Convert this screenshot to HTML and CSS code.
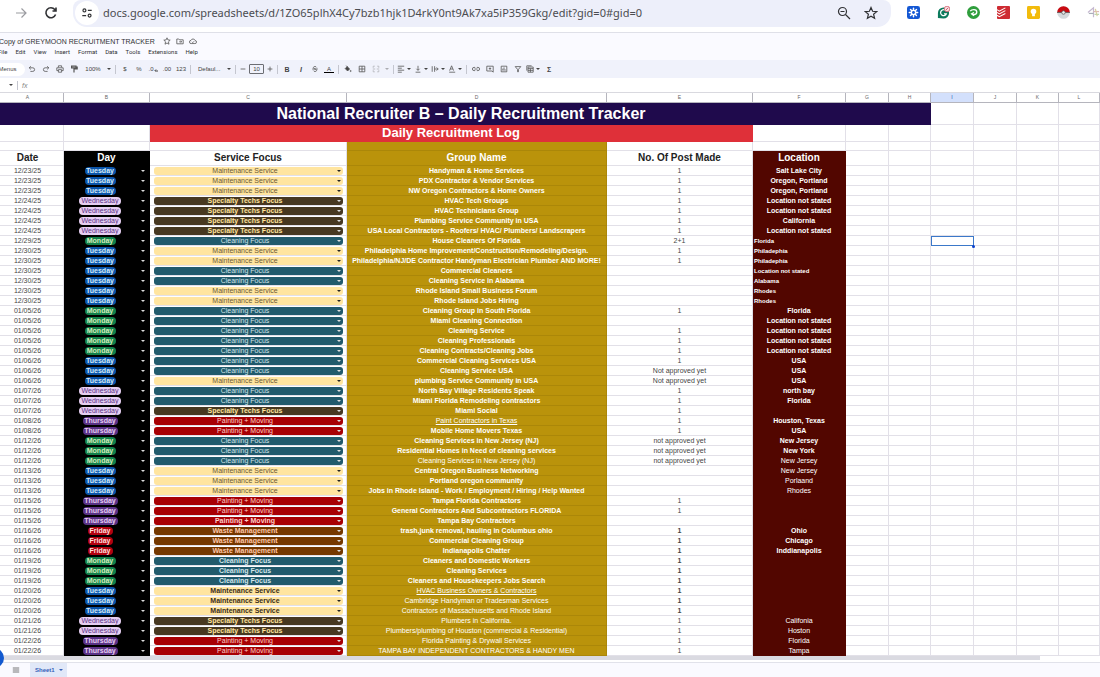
FILE: index.html
```html
<!DOCTYPE html>
<html lang="en">

<head>
    <meta charset="utf-8">
    <title>Copy of GREYMOON RECRUITMENT TRACKER</title>
    <link rel="stylesheet" href="styles.css">
</head>

<body>
    <div class="browserBar">
        <button class="navButton" aria-label="Forward">
            <svg class="navIcon dim" viewBox="0 0 14 14"><path d="M2 7h10M7.500 2.500L12 7l-4.500 4.500" /></svg>
        </button>
        <button class="navButton" aria-label="Reload">
            <svg class="navIcon" viewBox="0 0 14 14"><path d="M11.600 8.500A5 5 0 1 1 10.800 3.500L12 5M12 1.500V5H8.500" /></svg>
        </button>
        <div class="addressBar">
            <button class="siteInfo" aria-label="Site information">
                <svg class="siteIcon" viewBox="0 0 14 14"><circle cx="4" cy="4" r="1.700" /><path d="M8 4h4.500M1.500 10H6" /><circle cx="10" cy="10" r="1.700" /></svg>
            </button>
            <input type="text" class="url" aria-label="Address" value="docs.google.com/spreadsheets/d/1ZO65plhX4Cy7bzb1hjk1D4rkY0nt9Ak7xa5iP359Gkg/edit?gid=0#gid=0">
            <button class="barButton" aria-label="Zoom">
                <svg class="navIcon thin" viewBox="0 0 14 14"><circle cx="5.500" cy="5.500" r="4" /><path d="M8.500 8.500L13 13M3.500 5.500h4" /></svg>
            </button>
            <button class="barButton" aria-label="Bookmark">
                <svg class="navIcon thin" viewBox="0 0 14 14"><path d="M7 1.500l1.600 3.800 4.100.3-3.100 2.700 1 4L7 10.200l-3.600 2.100 1-4L1.300 5.600l4.100-.3z" /></svg>
            </button>
        </div>
        <div class="extensions">
            <button class="extButton" aria-label="Loom">
                <svg viewBox="0 0 14 14"><rect width="14" height="14" rx="2.500" fill="#1458d4" /><path d="M7 2.500v9M2.500 7h9M3.800 3.800l6.400 6.400M10.200 3.800l-6.400 6.400" stroke="#fff" stroke-width="1.600" stroke-linecap="round" /><circle cx="7" cy="7" r="3" fill="#fff" /><circle cx="7" cy="7" r="1.500" fill="#1458d4" /></svg>
            </button>
            <button class="extButton" aria-label="Grammarly">
                <svg viewBox="0 0 14 14"><path d="M1 13V7.500A6 6 0 1 1 7 13.500z" fill="#0c7a5c" /><path d="M8.500 4.300A3.200 3.200 0 1 0 10 8.500H7.500" fill="none" stroke="#fff" stroke-width="1.300" /><circle cx="10.800" cy="3.200" r="3" fill="#f7dfe2" stroke="#d25667" stroke-width=".8" /><path d="M9.500 4.500l2.600-2.600" stroke="#d25667" /></svg>
            </button>
            <button class="extButton" aria-label="Capture">
                <svg viewBox="0 0 14 14"><circle cx="7" cy="7" r="7" fill="#2f9e3c" /><path d="M3.500 5.500C5 3.500 10.500 3 10.500 6.500S6 9.500 5.500 8.500M7.500 7L5 8.500l2.500 2" fill="none" stroke="#fff" stroke-width="1.500" /></svg>
            </button>
            <button class="extButton" aria-label="Todoist">
                <svg viewBox="0 0 14 14"><rect width="14" height="14" rx="1" fill="#ce2b32" /><path d="M0 4l2.500 1.500L9 2M0 7l2.500 1.500L9 5M0 10l2.500 1.500L9 8" fill="none" stroke="#fff" stroke-width="1.100" /></svg>
            </button>
            <button class="extButton" aria-label="Keep">
                <svg viewBox="0 0 14 14"><rect width="14" height="14" rx="1.500" fill="#f2bb0c" /><circle cx="7" cy="6" r="3" fill="#fff" /><path d="M5.500 8h3v3h-3z" fill="#fff" /></svg>
            </button>
            <button class="extButton" aria-label="Pokeball">
                <svg viewBox="0 0 14 14"><circle cx="7" cy="7" r="6.800" fill="#d5d9dc" /><path d="M.2 7a6.800 6.800 0 0 1 13.600 0z" fill="#c90b12" /><path d="M0 7h14" stroke="#555" stroke-width=".8" /><circle cx="7" cy="7" r="1.900" fill="#eee" stroke="#555" stroke-width=".8" /></svg>
            </button>
            <button class="extButton" aria-label="Sparkle">
                <svg viewBox="0 0 14 14" fill="none" stroke-width="1.300"><path d="M1 7l6-5v10" stroke="#c5b8cf" /><path d="M2 8h5" stroke="#a9aeb9" /><path d="M7 6h6" stroke="#dfb6b6" /><path d="M8 9h5" stroke="#b6d6b0" /><path d="M9 3l2 8" stroke="#d9cfa0" /></svg>
            </button>
        </div>
    </div>

    <header class="docHeader">
        <div class="titleRow">
            <h1 class="docTitle">Copy of GREYMOON RECRUITMENT TRACKER</h1>
            <button class="titleButton" aria-label="Star"><svg class="icon" viewBox="0 0 10 10"><path d="M5 1l1.200 2.700 2.800.2L6.800 6l.7 3L5 7.500 2.500 9l.7-3L1 3.900l2.800-.2z" /></svg></button>
            <button class="titleButton" aria-label="Move"><svg class="icon" viewBox="0 0 10 10"><path d="M1 8.500v-6h2.500l1 1H9v5zM4 6h3M5.700 4.700L7 6 5.700 7.300" /></svg></button>
            <button class="titleButton" aria-label="Saved to Drive"><svg class="icon" viewBox="0 0 10 10"><path d="M2.700 8.200a2 2 0 0 1-.2-4 2.700 2.700 0 0 1 5.100.2 1.900 1.900 0 0 1-.2 3.800zM3.700 6l1 1 1.700-1.700" /></svg></button>
        </div>
        <nav class="menuRow">
            <button class="menu">File</button>
            <button class="menu">Edit</button>
            <button class="menu">View</button>
            <button class="menu">Insert</button>
            <button class="menu">Format</button>
            <button class="menu">Data</button>
            <button class="menu">Tools</button>
            <button class="menu">Extensions</button>
            <button class="menu">Help</button>
        </nav>
    </header>

    <div class="toolbar">
        <button class="menusButton">Menus</button>
        <button class="tool" aria-label="Undo"><svg class="icon" viewBox="0 0 10 10"><path d="M3.500 1.500L1.500 3.500l2 2M1.500 3.500H6a2.200 2.200 0 0 1 0 4.500H3" /></svg></button>
        <button class="tool" aria-label="Redo"><svg class="icon" viewBox="0 0 10 10"><path d="M6.500 1.500l2 2-2 2M8.500 3.500H4A2.200 2.200 0 0 0 4 8h3" /></svg></button>
        <button class="tool" aria-label="Print"><svg class="icon" viewBox="0 0 10 10"><path d="M3 3V1h4v2M3 7H1V3.500h8V7H7M3 5.800h4V9H3z" /></svg></button>
        <button class="tool" aria-label="Paint format"><svg class="icon bold" viewBox="0 0 10 10"><path d="M2 1.500h5.500v2H2zM7.500 2.500H9V5H5v1.500M5 6v3.500" /></svg></button>
        <button class="zoomButton">100%</button>
        <span class="caret"></span>
        <span class="divider"></span>
        <button class="tool">$</button>
        <button class="tool">%</button>
        <button class="tool" aria-label="Decrease decimal places">.0<svg class="tinyArrow" viewBox="0 0 4 6"><path d="M4 5H1M2 3.500L.6 5" /></svg></button>
        <button class="tool" aria-label="Increase decimal places">.00</button>
        <button class="tool">123</button>
        <span class="divider"></span>
        <select class="fontSelect" aria-label="Font">
            <option>Defaul...</option>
        </select>
        <span class="caret"></span>
        <span class="divider"></span>
        <button class="step" aria-label="Decrease font size"><svg class="icon" viewBox="0 0 10 10"><path d="M2 5h6" /></svg></button>
        <input type="text" class="fontSize" aria-label="Font size" value="10">
        <button class="step" aria-label="Increase font size"><svg class="icon" viewBox="0 0 10 10"><path d="M2 5h6M5 2v6" /></svg></button>
        <span class="divider"></span>
        <button class="tool strong">B</button>
        <button class="tool strong italic">I</button>
        <button class="tool" aria-label="Strikethrough"><svg class="icon" viewBox="0 0 10 10"><path d="M1.500 5h7M7 3C6.500 1.500 3 1.500 3 3.200 3 4.200 4 4.600 5 5c1.500.5 2 1 2 1.800C7 8.500 3.500 8.500 3 7" /></svg></button>
        <button class="tool textColor">A</button>
        <span class="divider"></span>
        <button class="tool" aria-label="Fill color"><svg class="icon" viewBox="0 0 10 10"><path d="M3 1l4 4-2.500 2.500L1.500 4.500 4 2z" fill="#444" /><circle cx="8.300" cy="7.500" r=".7" /></svg></button>
        <button class="tool" aria-label="Borders"><svg class="icon" viewBox="0 0 10 10"><path d="M1.500 1.500h7v7h-7zM5 1.500v7M1.500 5h7" /></svg></button>
        <button class="tool faded" aria-label="Merge cells"><svg class="icon" viewBox="0 0 10 10"><path d="M3.500 1.500h-2v2M1.500 6.500v2h2M6.500 1.500h2v2M8.500 6.500v2h-2M1 5h3M9 5H6" /></svg></button>
        <span class="caret faded"></span>
        <span class="divider"></span>
        <button class="menuTool" aria-label="Horizontal align"><svg class="icon" viewBox="0 0 10 10"><path d="M1 1.500h8M1 4h5M1 6.500h8M1 9h5" /></svg><span class="caret"></span></button>
        <button class="menuTool" aria-label="Vertical align"><svg class="icon" viewBox="0 0 10 10"><path d="M5 1v5.500M3 4.700l2 2 2-2M2 9h6" /></svg><span class="caret"></span></button>
        <button class="menuTool" aria-label="Text wrapping"><svg class="icon" viewBox="0 0 10 10"><path d="M1.500 1.500v7M4.500 1.500v7M4.500 5H9M7 3l2 2-2 2" /></svg><span class="caret"></span></button>
        <button class="menuTool" aria-label="Text rotation"><svg class="icon" viewBox="0 0 10 10"><path d="M2 7l2.500-6L7 7M3 5h3M1.500 9H9" /></svg><span class="caret"></span></button>
        <span class="divider"></span>
        <button class="tool" aria-label="Insert link"><svg class="icon" viewBox="0 0 10 10"><path d="M4 3H2.500a2 2 0 0 0 0 4H4M6 3h1.500a2 2 0 0 1 0 4H6M3 5h4" /></svg></button>
        <button class="tool" aria-label="Insert comment"><svg class="icon" viewBox="0 0 10 10"><path d="M1 1.500h8V9L7.500 7.500H1zM5 3v3M3.500 4.500h3" /></svg></button>
        <button class="tool" aria-label="Insert chart"><svg class="icon" viewBox="0 0 10 10"><path d="M1.500 1.500h7v7h-7zM3.500 7V4.500M5 7V3M6.500 7V5.500" /></svg></button>
        <button class="tool" aria-label="Filter"><svg class="icon" viewBox="0 0 10 10"><path d="M1.500 2h7L5.500 5.500v3h-1v-3z" /></svg></button>
        <button class="menuTool" aria-label="Filter views"><svg class="icon" viewBox="0 0 10 10"><path d="M1 7V1h6M2.500 2.500H9V9H2.500zM2.500 4.500H9M5.500 4.500V9M2.500 6.700H9" /></svg><span class="caret"></span></button>
        <button class="tool strong">&Sigma;</button>
    </div>

    <div class="formulaBar">
        <button class="nameBox" aria-label="Name box"><span class="caret"></span></button>
        <span class="divider"></span>
        <label class="fx" for="formula">fx</label>
        <input type="text" id="formula" class="formula">
    </div>

    <main class="sheet">
        <table class="grid">
            <colgroup>
                <col class="colA">
                <col class="colB">
                <col class="colC">
                <col class="colD">
                <col class="colE">
                <col class="colF">
                <col class="colG">
                <col class="colH">
                <col class="colI">
                <col class="colJ">
                <col class="colK">
                <col>
            </colgroup>
            <thead>
                <tr class="letters">
                    <th class="date">A</th>
                    <th>B</th>
                    <th>C</th>
                    <th>D</th>
                    <th>E</th>
                    <th>F</th>
                    <th>G</th>
                    <th>H</th>
                    <th class="active">I</th>
                    <th>J</th>
                    <th>K</th>
                    <th>L</th>
                </tr>
            </thead>
            <tbody id="rows">
                <tr class="titleLine">
                    <td colspan="8" class="banner">National Recruiter B – Daily Recruitment Tracker</td>
                    <td></td><td></td><td></td><td></td>
                </tr>
                <tr class="subLine">
                    <td></td><td></td>
                    <td colspan="3" class="subBanner">Daily Recruitment Log</td>
                    <td></td><td></td><td></td><td></td><td></td><td></td><td></td>
                </tr>
                <tr class="gapLine">
                    <td></td><td></td><td></td>
                    <td class="group"></td>
                    <td></td><td></td><td></td><td></td><td></td><td></td><td></td><td></td>
                </tr>
                <tr class="headLine">
                    <th class="date">Date</th>
                    <th class="day">Day</th>
                    <th>Service Focus</th>
                    <th class="group">Group Name</th>
                    <th>No. Of Post Made</th>
                    <th class="location">Location</th>
                    <td></td><td></td><td></td><td></td><td></td><td></td>
                </tr>
            </tbody>
        </table>
    </main>
    <div class="scrollTrack"><div class="scrollThumb"></div></div>

    <footer class="tabs">
        <button class="allSheets" aria-label="All sheets"><svg class="icon" viewBox="0 0 10 10"><path d="M1 2.500h8M1 5h8M1 7.500h8" /></svg></button>
        <button class="sheetTab">Sheet1 <span class="caret"></span></button>
    </footer>
    <button class="helpBubble" aria-label="Explore"></button>

    <script src="script.js"></script>
</body>

</html>
```

FILE: styles.css
```css
* {
    box-sizing: border-box;
}

body {
    margin: 0;
    min-height: 100vh;
    display: flex;
    flex-direction: column;
    position: relative;
    overflow: hidden;
    background-color: #fff;
    font-family: "Liberation Sans", Arial, sans-serif;
    font-size: 7px;
    color: #444;
}

button,
input,
select {
    margin: 0;
    padding: 0;
    border: none;
    border-radius: 0;
    background: none;
    font: inherit;
    color: inherit;
    appearance: none;
}

button {
    display: flex;
    align-items: center;
    justify-content: center;
    flex-shrink: 0;
}

/* browser bar */
.browserBar {
    display: flex;
    height: 33px;
    padding-left: 6px;
    border-bottom: 1px solid #dfe0e8;
}

.navButton {
    width: 30px;
    height: 25px;
}

.navIcon {
    width: 14px;
    height: 14px;
    fill: none;
    stroke: #303134;
    stroke-width: 1.6;
}

.siteIcon {
    width: 12px;
    height: 12px;
    fill: none;
    stroke: #303134;
    stroke-width: 1.4;
}

.navIcon.thin {
    stroke-width: 1.2;
}

.navIcon.dim {
    stroke: #9a9ba0;
    stroke-width: 1.2;
}

.addressBar {
    display: flex;
    flex: 1;
    align-items: center;
    height: 27px;
    margin-left: 7px;
    padding: 0 7px 2px 2px;
    border-radius: 8px 8px 14px 14px;
    background-color: #edeffa;
}

.siteInfo {
    width: 24px;
    height: 24px;
    border-radius: 12px;
    background-color: #fff;
}

.url {
    flex: 1;
    min-width: 0;
    margin-left: 4px;
    font-family: "Noto Sans", sans-serif;
    font-size: 11px;
    color: #4b4c50;
}

.barButton {
    width: 27px;
    height: 24px;
}

/* the last extension runs off the window edge */
.extensions {
    display: flex;
    height: 25px;
    margin-left: 7px;
    margin-right: -8px;
}

.extButton {
    width: 30px;
}

.extButton svg {
    width: 13px;
    height: 13px;
}

/* document header */
.docHeader {
    height: 27px;
    padding-top: 2px;
    background-color: #fafaff;
}

.titleRow,
.menuRow {
    display: flex;
    align-items: center;
    height: 12px;
}

.docTitle {
    margin: 0 6px 0 -1px;
    font-size: 7px;
    font-weight: normal;
    color: #303134;
}

.titleButton {
    width: 13px;
}

.menuRow {
    height: 9px;
    gap: 8px;
    margin-left: -2px;
    font-family: Roboto, sans-serif;
    font-size: 6px;
    color: #303134;
}

.icon {
    width: 8px;
    height: 8px;
    fill: none;
    stroke: #555;
    stroke-width: 1;
}

.icon.bold {
    stroke-width: 1.5;
}

/* toolbar */
.toolbar {
    display: flex;
    align-items: center;
    height: 18px;
    background-color: #f0f2fb;
    font-size: 6px;
    color: #444;
}

.menusButton {
    width: 25px;
    height: 13px;
    padding-right: 10px;
    border-radius: 0 7px 7px 0;
    background-color: #fff;
}

.tool {
    width: 14px;
    height: 14px;
}

.tinyArrow {
    width: 4px;
    height: 6px;
    fill: none;
    stroke: #444;
}

.strong {
    font-weight: bold;
    font-size: 7px;
}

.italic {
    font-style: italic;
}

.textColor {
    width: 10px;
    height: 8px;
    margin: 0 2px;
    border-bottom: 1px solid #000;
}

.faded {
    opacity: 0.4;
}

.zoomButton {
    width: 24px;
}

.caret {
    display: flex;
    flex-shrink: 0;
    justify-content: center;
    width: 8px;
}

.caret::after {
    content: "";
    border: 2px solid transparent;
    border-top-color: #444;
    border-bottom: none;
}

.divider {
    width: 1px;
    height: 9px;
    margin: 0 2px;
    background-color: #c4c6cf;
}

.fontSelect {
    width: 32px;
    padding-left: 5px;
}

.step {
    width: 10px;
    height: 14px;
}

.fontSize {
    width: 15px;
    height: 10px;
    margin: 0 1px;
    border: 1px solid #6b6d73;
    border-radius: 1px;
    text-align: center;
}

.menuTool {
    width: 17px;
    height: 14px;
    padding-left: 1px;
}

/* formula bar */
.formulaBar {
    display: flex;
    align-items: center;
    height: 15px;
    padding-left: 7px;
    border-bottom: 1px solid #d9d9df;
}

.nameBox {
    width: 8px;
}

.fx {
    margin-left: 2px;
    font-style: italic;
    color: #888;
}

.formula {
    flex: 1;
    margin-left: 6px;
}

/* sheet */
.grid {
    width: 100%;
    table-layout: fixed;
    border-collapse: separate;
    border-spacing: 0;
    line-height: 9px;
}

.colA {
    width: 64px;
}

.colB {
    width: 86px;
}

.colC {
    width: 197px;
}

.colD {
    width: 260px;
}

.colE {
    width: 146px;
}

.colF {
    width: 93px;
}

.colG,
.colI,
.colJ {
    width: 43px;
}

.colH,
.colK {
    width: 42px;
}

.grid td,
.grid th {
    height: 10px;
    padding: 0;
    border-right: 1px solid #e2e0e8;
    border-bottom: 1px solid #e2e0e8;
    text-align: center;
    white-space: nowrap;
}

.grid .letters th {
    border-color: #b5b5bd;
    font-size: 5px;
    font-weight: normal;
    color: #666;
}

.grid .letters .active {
    background-color: #d3e0fc;
    color: #174ea6;
}

.grid .date {
    padding-right: 8px;
}

.grid .titleLine td {
    height: 22px;
}

.grid .subLine td {
    height: 17px;
}

.grid .gapLine td {
    height: 9px;
}

.grid .headLine th {
    height: 15px;
    font-size: 10px;
    line-height: 14px;
    color: #222;
}

.grid .banner {
    padding-right: 8px;
    border-color: #1f0a4c;
    background-color: #1f0a4c;
    font-size: 16px;
    font-weight: bold;
    line-height: 21px;
    color: #fff;
}

.grid .subBanner {
    border-color: #df3039;
    background-color: #df3039;
    font-size: 13px;
    font-weight: bold;
    line-height: 16px;
    color: #fff;
}

.grid .day {
    border-color: #000;
    background-color: #000;
}

.grid .group {
    border-color: #ab8709;
    background-color: #ba930b;
    color: #fff;
}

.grid .location {
    border-color: #520600;
    background-color: #520600;
    color: #fff;
}

.grid .headLine .day,
.grid .headLine .group,
.grid .headLine .location {
    color: #fff;
}

.grid .heavy {
    font-weight: bold;
}

.grid .link {
    text-decoration: underline;
}

.grid .note {
    padding-top: 2px;
    padding-left: 1px;
    font-size: 6px;
    line-height: 7px;
    text-align: left;
}

.grid .selected {
    position: relative;
    outline: 1px solid #3b78c9;
    outline-offset: -1px;
}

.selected::after {
    content: "";
    position: absolute;
    right: -2px;
    bottom: -3px;
    width: 3px;
    height: 3px;
    border-radius: 2px;
    background-color: #0b41cd;
}

/* drop-down chips */
.pick {
    display: flex;
    align-items: center;
    height: 9px;
}

.chip {
    height: 8px;
    line-height: 8px;
    border-radius: 4px;
    text-align: center;
    text-align-last: center;
}

.pick .caret {
    width: 5px;
}

.pick .caret::after {
    border-top-color: #ddd;
}

.day .chip {
    margin: 0 auto;
}

.day .caret {
    margin: 0 4px;
}

.service .pick {
    position: relative;
    padding: 0 3px 0 4px;
}

.service .chip {
    flex: 1;
    padding-right: 7px;
    border-radius: 3px;
}

.service .caret {
    position: absolute;
    right: 5px;
}

.service .maintenance + .caret::after {
    border-top-color: #222;
}

.monday {
    width: 31px;
    background-color: #11804b;
    color: #d4edbc;
    font-weight: bold;
}

.tuesday {
    width: 31px;
    background-color: #0a53a8;
    color: #d5ecfb;
    font-weight: bold;
}

.wednesday {
    width: 42px;
    background-color: #e6cff2;
    color: #5a3286;
}

.thursday {
    width: 35px;
    background-color: #5a3286;
    color: #e6cff2;
    font-weight: bold;
}

.friday {
    width: 25px;
    background-color: #b10210;
    color: #ffdfd9;
    font-weight: bold;
}

.maintenance {
    background-color: #ffe5a0;
    color: #6b5a38;
}

.maintenance.heavy {
    color: #3a2d18;
}

.specialty {
    background-color: #473821;
    color: #ffe5a0;
}

.cleaning {
    background-color: #215a6c;
    color: #d3e6eb;
}

.painting {
    background-color: #a80004;
    color: #ffcfc9;
}

.waste {
    background-color: #753800;
    color: #ffc8aa;
}

/* bottom */
.scrollTrack {
    height: 7px;
    border-bottom: 1px solid #e1e2ea;
}

.scrollThumb {
    width: 94.5%;
    height: 4px;
    background-color: #dadae1;
}

.tabs {
    display: flex;
    flex: 1;
    padding-left: 9px;
    background-color: #fafaff;
}

.allSheets {
    width: 13px;
}

.sheetTab {
    gap: 2px;
    margin-left: 8px;
    padding: 0 2px 0 5px;
    background-color: #e1e8f8;
    font-size: 6px;
    font-weight: bold;
    color: #3560b8;
}

.sheetTab .caret::after {
    border-top-color: #3560b8;
}

.helpBubble {
    position: absolute;
    left: -16px;
    bottom: 9px;
    width: 20px;
    height: 20px;
    border-radius: 10px;
    background-color: #1259cf;
}
```

FILE: script.js
```js
const dayNames = { M: 'Monday', T: 'Tuesday', W: 'Wednesday', H: 'Thursday', F: 'Friday' };
const services = {
    m: ['Maintenance Service', 'maintenance'],
    s: ['Specialty Techs Focus', 'specialty'],
    c: ['Cleaning Focus', 'cleaning'],
    p: ['Painting + Moving', 'painting'],
    w: ['Waste Management', 'waste']
};

// date, day, service, group, posts, location
// a leading * makes the text bold, _ underlines it, < puts it bottom left in small type
const rows = [
    ['12/23/25', 'T', 'm', '*Handyman & Home Services', '1', '*Salt Lake City'],
    ['12/23/25', 'T', 'm', '*PDX Contractor & Vendor Services', '1', '*Oregon, Portland'],
    ['12/23/25', 'T', 'm', '*NW Oregon Contractors & Home Owners', '1', '*Oregon, Portland'],
    ['12/24/25', 'W', '*s', '*HVAC Tech Groups', '1', '*Location not stated'],
    ['12/24/25', 'W', '*s', '*HVAC Technicians Group', '1', '*Location not stated'],
    ['12/24/25', 'W', '*s', '*Plumbing Service Community in USA', '1', '*California'],
    ['12/24/25', 'W', '*s', '*USA Local Contractors - Roofers/ HVAC/ Plumbers/ Landscrapers', '1', '*Location not stated'],
    ['12/29/25', 'M', 'c', '*House Cleaners Of Florida', '2+1', '<Florida'],
    ['12/30/25', 'T', 'm', '*Philadelphia Home Improvement/Construction/Remodeling/Design.', '1', '<Philadephia'],
    ['12/30/25', 'T', 'm', '*Philadelphia/NJ/DE Contractor Handyman Electrician Plumber AND MORE!', '1', '<Philadephia'],
    ['12/30/25', 'T', 'c', '*Commercial Cleaners', '', '<Location not stated'],
    ['12/30/25', 'T', 'c', '*Cleaning Service in Alabama', '', '<Alabama'],
    ['12/30/25', 'T', 'm', '*Rhode Island Small Business Forum', '', '<Rhodes'],
    ['12/30/25', 'T', 'm', '*Rhode Island Jobs Hiring', '', '<Rhodes'],
    ['01/05/26', 'M', 'c', '*Cleaning Group in South Florida', '1', '*Florida'],
    ['01/05/26', 'M', 'c', '*Miami Cleaning Connection', '', '*Location not stated'],
    ['01/05/26', 'M', 'c', '*Cleaning Service', '1', '*Location not stated'],
    ['01/05/26', 'M', 'c', '*Cleaning Professionals', '1', '*Location not stated'],
    ['01/05/26', 'M', 'c', '*Cleaning Contracts/Cleaning Jobs', '1', '*Location not stated'],
    ['01/06/26', 'T', 'c', '*Commercial Cleaning Services USA', '1', '*USA'],
    ['01/06/26', 'T', 'c', '*Cleaning Service USA', 'Not approved yet', '*USA'],
    ['01/06/26', 'T', 'm', '*plumbing Service Community in USA', 'Not approved yet', '*USA'],
    ['01/07/26', 'W', 'c', '*North Bay Village Residents Speak', '1', '*north bay'],
    ['01/07/26', 'W', 'c', '*Miami Florida Remodeling contractors', '1', '*Florida'],
    ['01/07/26', 'W', '*s', '*Miami Social', '1', ''],
    ['01/08/26', 'H', 'p', '_Paint Contractors in Texas', '1', '*Houston, Texas'],
    ['01/08/26', 'H', 'p', '*Mobile Home Movers Texas', '1', '*USA'],
    ['01/12/26', 'M', 'c', '*Cleaning Services in New Jersey (NJ)', 'not approved yet', '*New Jersey'],
    ['01/12/26', 'M', 'c', '*Residential Homes in Need of cleaning services', 'not approved yet', '*New York'],
    ['01/12/26', 'M', 'c', 'Cleaning Services in New Jersey (NJ)', 'not approved yet', 'New Jersey'],
    ['01/13/26', 'T', 'm', '*Central Oregon Business Networking', '', 'New Jersey'],
    ['01/13/26', 'T', 'm', '*Portland oregon community', '', 'Porlaand'],
    ['01/13/26', 'T', 'm', '*Jobs in Rhode Island - Work / Employment / Hiring / Help Wanted', '', 'Rhodes'],
    ['01/15/26', 'H', 'p', '*Tampa Florida Contractors', '1', ''],
    ['01/15/26', 'H', 'p', '*General Contractors And Subcontractors FLORIDA', '1', ''],
    ['01/15/26', 'H', '*p', '*Tampa Bay Contractors', '', ''],
    ['01/16/26', 'F', '*w', '*trash,junk removal, hauling in Columbus ohio', '*1', '*Ohio'],
    ['01/16/26', 'F', '*w', '*Commercial Cleaning Group', '*1', '*Chicago'],
    ['01/16/26', 'F', '*w', '*Indianapolis Chatter', '*1', '*Inddianapolis'],
    ['01/19/26', 'M', '*c', '*Cleaners and Domestic Workers', '*1', ''],
    ['01/19/26', 'M', '*c', '*Cleaning Services', '*1', ''],
    ['01/19/26', 'M', '*c', '*Cleaners and Housekeepers Jobs Search', '*1', ''],
    ['01/20/26', 'T', '*m', '_HVAC Business Owners & Contractors', '*1', ''],
    ['01/20/26', 'T', '*m', 'Cambridge Handyman or Tradesman Services', '*1', ''],
    ['01/20/26', 'T', '*m', 'Contractors of Massachusetts and Rhode Island', '*1', ''],
    ['01/21/26', 'W', '*s', 'Plumbers in California.', '1', 'Califonia'],
    ['01/21/26', 'W', '*s', 'Plumbers/plumbing of Houston (commercial & Residential)', '1', 'Hoston'],
    ['01/22/26', 'H', 'p', 'Florida Painting & Drywall Services', '1', 'Florida'],
    ['01/22/26', 'H', 'p', 'TAMPA BAY INDEPENDENT CONTRACTORS & HANDY MEN', '1', 'Tampa']
];

const marks = { '*': 'heavy', '_': 'link', '<': 'note heavy' };

const addCell = (tr, text, className) => {
    const td = tr.insertCell();
    const mark = marks[text[0]];
    td.textContent = mark ? text.slice(1) : text;
    td.className = `${className} ${mark || ''}`.trim();
    return td;
}

const addPick = (tr, label, value, className, chipClass, choices) => {
    const td = addCell(tr, '', className);
    const pick = document.createElement('div');
    pick.className = 'pick';
    const select = document.createElement('select');
    select.className = `chip ${chipClass}`;
    select.setAttribute('aria-label', label);
    choices.forEach((choice) => select.add(new Option(choice, choice, false, choice === value)));
    const caret = document.createElement('span');
    caret.className = 'caret';
    pick.append(select, caret);
    td.append(pick);
}

const body = document.getElementById('rows');
const serviceNames = Object.values(services).map((s) => s[0]);

rows.forEach(([date, day, service, group, posts, location], index) => {
    const tr = body.insertRow();
    addCell(tr, date, 'date');
    addPick(tr, 'Day', dayNames[day], 'day', dayNames[day].toLowerCase(), Object.values(dayNames));
    const [name, color] = services[service.slice(-1)];
    const weight = service[0] === '*' ? ' heavy' : '';
    addPick(tr, 'Service focus', name, 'service', color + weight, serviceNames);
    addCell(tr, group, 'group');
    addCell(tr, posts, 'posts');
    addCell(tr, location, 'location');
    for (let i = 0; i < 6; i++) {
        addCell(tr, '', index === 7 && i === 2 ? 'selected' : '');
    }
});
```
